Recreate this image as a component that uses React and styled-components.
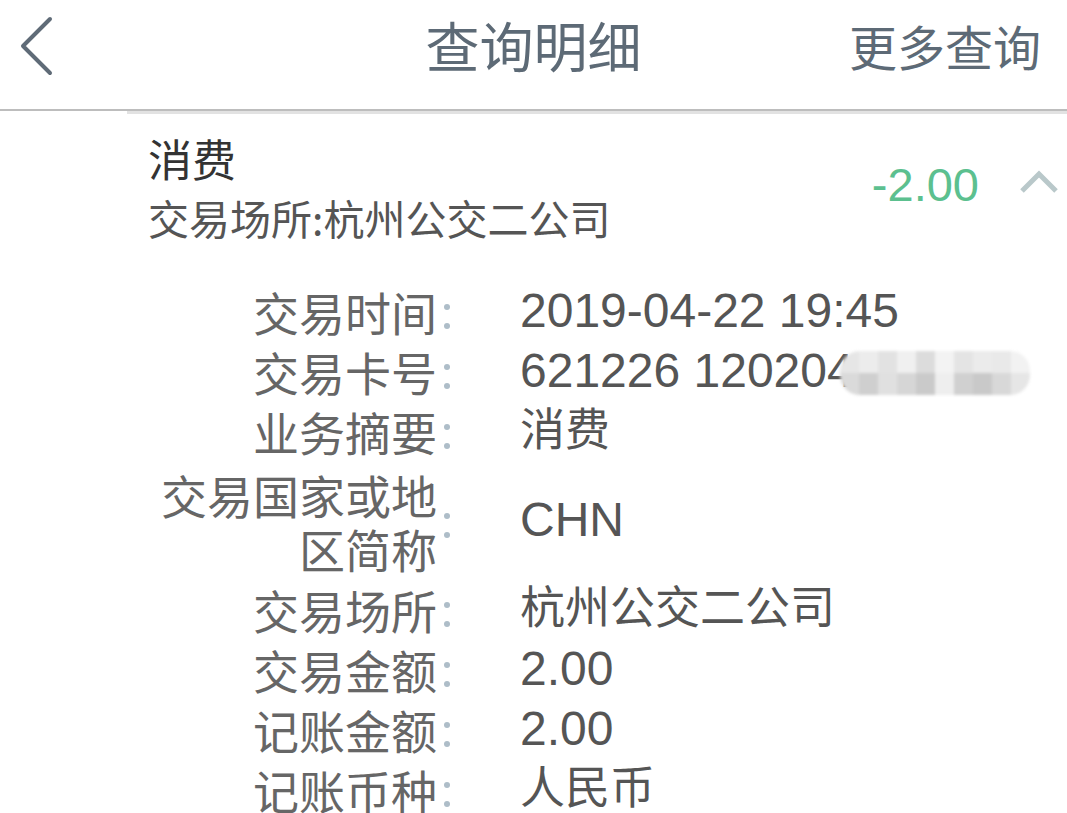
import styled, { createGlobalStyle } from 'styled-components';

const GlobalStyle = createGlobalStyle`
  html, body {
    margin: 0;
    padding: 0;
    background: #ffffff;
  }
  body {
    font-family: "Liberation Sans", "Noto Sans CJK SC", sans-serif;
  }
`;

const Page = styled.div`
  width: 1067px;
  height: 813px;
  overflow: hidden;
  background: #fff;
  display: flex;
  flex-direction: column;
`;

const Header = styled.header`
  height: 109px;
  flex-shrink: 0;
  border-bottom: 2px solid #bdbdbd;
  display: grid;
  grid-template-columns: 200px 1fr 200px;
  align-items: center;
  color: #5d6a76;
`;

const BackButton = styled.button`
  background: none;
  border: none;
  padding: 0 0 18px 18px;
  justify-self: start;
  display: flex;
  cursor: pointer;
`;

const Title = styled.h1`
  margin: 0 0 20px;
  text-align: center;
  font-weight: 400;
  font-size: 54px;
  line-height: 60px;
  font-family: "Noto Sans CJK SC", sans-serif;
`;

const MoreLink = styled.span`
  justify-self: end;
  padding-right: 26px;
  margin-bottom: 20px;
  font-size: 48px;
  line-height: 60px;
  font-family: "Noto Sans CJK SC", sans-serif;
  white-space: nowrap;
`;

const Card = styled.section`
  margin-left: 127px;
  border-top: 3px solid #e2e2e2;
  display: flex;
  flex-direction: column;
`;

const Summary = styled.div`
  display: flex;
  padding: 17px 8px 0 21px;
  height: 167px;
  box-sizing: border-box;
  align-items: flex-start;
`;

const SummaryText = styled.div`
  flex: 1;
  display: flex;
  flex-direction: column;
`;

const Kind = styled.div`
  font-family: "Noto Sans CJK SC", sans-serif;
  font-size: 44px;
  line-height: 54px;
  color: #333;
`;

const Place = styled.div`
  font-family: "Noto Sans CJK SC", sans-serif;
  font-size: 41px;
  line-height: 64px;
  color: #555;
`;

const Amount = styled.div`
  margin-top: 24px;
  font-size: 47px;
  line-height: 60px;
  color: #5cc08f;
  margin-right: 40px;
`;

const Toggle = styled.span`
  margin-top: 38px;
  display: flex;
`;

const Details = styled.div`
  display: grid;
  grid-template-columns: 310px 20px 1fr;
`;

const Label = styled.div`
  font-family: "Noto Sans CJK SC", sans-serif;
  font-size: 46px;
  line-height: ${({ $wrap }) => ($wrap ? '54px' : '60px')};
  padding: ${({ $wrap }) => ($wrap ? '6px 0 4px' : '0')};
  color: #666;
  text-align: right;
  display: flex;
  align-items: center;
  justify-content: flex-end;
  white-space: nowrap;
`;

const Colon = styled.div`
  display: flex;
  flex-direction: column;
  align-items: center;
  justify-content: center;
  gap: 13px;
  padding-top: 10px;

  &::before,
  &::after {
    content: '';
    width: 6px;
    height: 6px;
    border-radius: 50%;
    background: #aebdc8;
  }
`;

const Value = styled.div`
  padding-left: 63px;
  font-size: ${({ $cjk }) => ($cjk ? '45px' : '48px')};
  line-height: 60px;
  color: #555;
  display: flex;
  align-items: center;
  white-space: nowrap;
`;

const Mosaic = styled.span`
  display: inline-grid;
  grid-template-columns: repeat(10, 19px);
  grid-template-rows: repeat(2, 22px);
  margin-left: -14px;
  margin-top: 4px;
  border-radius: 20px;
  overflow: hidden;
  filter: blur(1.5px);
`;

const Cell = styled.span`
  background: ${({ $tone }) => $tone};
`;

const mosaicTones = [
  '#e6e6e6', '#ececec', '#e2e2e2', '#f0f0f0', '#dcdcdc', '#f3f3f3', '#e4e4e4', '#ebebeb', '#e9e9e9', '#f2f2f2',
  '#dadada', '#cfcfcf', '#e0e0e0', '#d6d6d6', '#cacaca', '#eeeeee', '#d0d0d0', '#c9c9c9', '#d8d8d8', '#e6e6e6',
];

const rows = [
  { label: '交易时间', value: '2019-04-22 19:45' },
  { label: '交易卡号', value: '621226 120204', masked: true },
  { label: '业务摘要', value: '消费', cjk: true },
  { label: ['交易国家或地', '区简称'], value: 'CHN' },
  { label: '交易场所', value: '杭州公交二公司', cjk: true },
  { label: '交易金额', value: '2.00' },
  { label: '记账金额', value: '2.00' },
  { label: '记账币种', value: '人民币', cjk: true },
];

export default function App() {
  return (
    <>
      <GlobalStyle />
      <Page>
        <Header>
          <BackButton aria-label="返回">
            <svg width="40" height="62" viewBox="0 0 40 62">
              <polyline
                points="32,4 5,31 32,58"
                fill="none"
                stroke="#5f6b77"
                strokeWidth="4"
                strokeLinecap="round"
                strokeLinejoin="round"
              />
            </svg>
          </BackButton>
          <Title>查询明细</Title>
          <MoreLink>更多查询</MoreLink>
        </Header>

        <Card>
          <Summary>
            <SummaryText>
              <Kind>消费</Kind>
              <Place>交易场所:杭州公交二公司</Place>
            </SummaryText>
            <Amount>-2.00</Amount>
            <Toggle>
              <svg width="40" height="26" viewBox="0 0 40 26">
                <polyline
                  points="3,22 20,5 37,22"
                  fill="none"
                  stroke="#b9c8ca"
                  strokeWidth="5"
                />
              </svg>
            </Toggle>
          </Summary>

          <Details>
            {rows.map((row, idx) => {
              const wrap = Array.isArray(row.label);
              return [
                <Label key={`l${idx}`} $wrap={wrap}>
                  {wrap ? (
                    <span>
                      {row.label[0]}
                      <br />
                      {row.label[1]}
                    </span>
                  ) : (
                    row.label
                  )}
                </Label>,
                <Colon key={`c${idx}`} />,
                <Value key={`v${idx}`} $cjk={row.cjk}>
                  {row.value}
                  {row.masked && (
                    <Mosaic>
                      {mosaicTones.map((t, i) => (
                        <Cell key={i} $tone={t} />
                      ))}
                    </Mosaic>
                  )}
                </Value>,
              ];
            })}
          </Details>
        </Card>
      </Page>
    </>
  );
}
